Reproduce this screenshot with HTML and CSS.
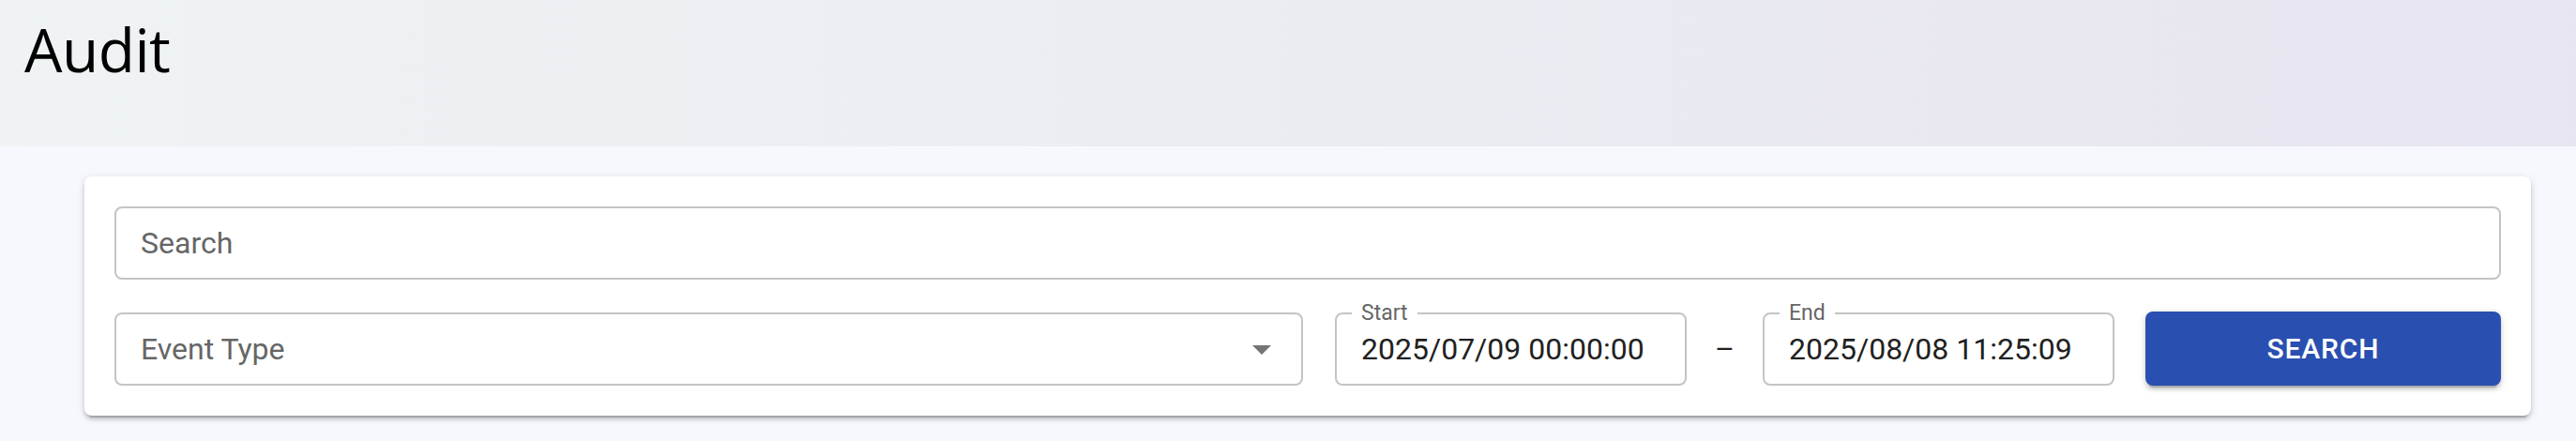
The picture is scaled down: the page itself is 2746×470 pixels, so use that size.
FILE: index.html
```html
<!DOCTYPE html>
<html lang="en">
<head>
    <meta charset="UTF-8">
    <meta name="viewport" content="width=device-width, initial-scale=1.0">
    <title>Audit</title>
    <link rel="stylesheet" href="styles.css">
</head>
<body>
    <header class="page-header">
        <h1 class="page-title">Audit</h1>
    </header>

    <main class="page-body">
        <section class="filter-card">
            <div class="field">
                <input class="field-input" type="text" placeholder="Search">
            </div>

            <div class="filter-row">
                <div class="field field-select">
                    <span class="field-placeholder">Event Type</span>
                    <svg class="select-arrow" viewBox="0 0 24 24" aria-hidden="true">
                        <path d="M7 10l5 5 5-5z"></path>
                    </svg>
                </div>

                <div class="field field-date">
                    <label class="field-legend">Start</label>
                    <input class="field-input field-value" type="text" value="2025/07/09 00:00:00">
                </div>

                <span class="range-sep">–</span>

                <div class="field field-date">
                    <label class="field-legend">End</label>
                    <input class="field-input field-value" type="text" value="2025/08/08 11:25:09">
                </div>

                <button class="search-button" type="button">Search</button>
            </div>
        </section>
    </main>
</body>
</html>
```

FILE: styles.css
```css
:root {
    --header-left: #eff3f4;
    --header-right: #e7e5f0;
    --page-bg: #f7f8fd;
    --card-bg: #fff;
    --border-color: #c4c4c4;
    --label-color: #666;
    --text-color: #212121;
    --icon-color: #757575;
    --primary-color: #294fb0;
}
body {
    margin: 0;
    padding: 0;
    min-height: 100vh;
    font-family: Roboto, "Liberation Sans", Arial, sans-serif;
    background-color: var(--page-bg);
    color: var(--text-color);
}
.page-header {
    height: 156px;
    box-sizing: border-box;
    padding: 15px 26px 0;
    background: linear-gradient(90deg, var(--header-left), var(--header-right));
}
.page-title {
    margin: 0;
    font-family: "Open Sans", "Noto Sans", sans-serif;
    font-size: 64px;
    font-weight: 500;
    letter-spacing: -0.5px;
    line-height: 1.2;
    color: #000;
}
.page-body {
    padding: 32px 48px 0 90px;
}
.filter-card {
    display: flex;
    flex-direction: column;
    gap: 34px;
    padding: 32px;
    background: var(--card-bg);
    border-radius: 8px;
    box-shadow: 0 6px 2px -4px rgba(0, 0, 0, 0.2),
                0 4px 4px 0 rgba(0, 0, 0, 0.14),
                0 2px 10px 0 rgba(0, 0, 0, 0.12);
}
.filter-row {
    display: flex;
    align-items: center;
}
.field {
    position: relative;
    display: flex;
    align-items: center;
    height: 78px;
    box-sizing: border-box;
    border: 2px solid var(--border-color);
    border-radius: 8px;
    background: #fff;
}
.field-input {
    flex: 1;
    min-width: 0;
    height: 100%;
    padding: 0 26px;
    border: none;
    outline: none;
    background: transparent;
    font-family: inherit;
    font-size: 32px;
    color: var(--text-color);
}
.field-input::placeholder {
    color: var(--label-color);
    opacity: 1;
}
.field-select {
    flex: 1;
    padding: 0 18px 0 26px;
    margin-right: 34px;
}
.field-placeholder {
    flex: 1;
    font-size: 32px;
    color: var(--label-color);
}
.select-arrow {
    width: 48px;
    height: 48px;
    fill: var(--icon-color);
}
.field-date {
    width: 375px;
    flex-shrink: 0;
}
.field-legend {
    position: absolute;
    top: -15px;
    left: 16px;
    padding: 0 10px;
    font-size: 23px;
    line-height: 28px;
    color: var(--label-color);
    background: #fff;
}
.range-sep {
    width: 81px;
    flex-shrink: 0;
    text-align: center;
    font-size: 32px;
    color: var(--text-color);
}
.search-button {
    width: 379px;
    height: 79px;
    margin-left: 33px;
    flex-shrink: 0;
    border: none;
    border-radius: 8px;
    background: var(--primary-color);
    color: #fff;
    font-family: inherit;
    font-size: 30px;
    font-weight: 500;
    letter-spacing: 0.85px;
    text-transform: uppercase;
    cursor: pointer;
    box-shadow: 0 6px 2px -4px rgba(0, 0, 0, 0.2),
                0 4px 4px 0 rgba(0, 0, 0, 0.14),
                0 2px 10px 0 rgba(0, 0, 0, 0.12);
}
```
